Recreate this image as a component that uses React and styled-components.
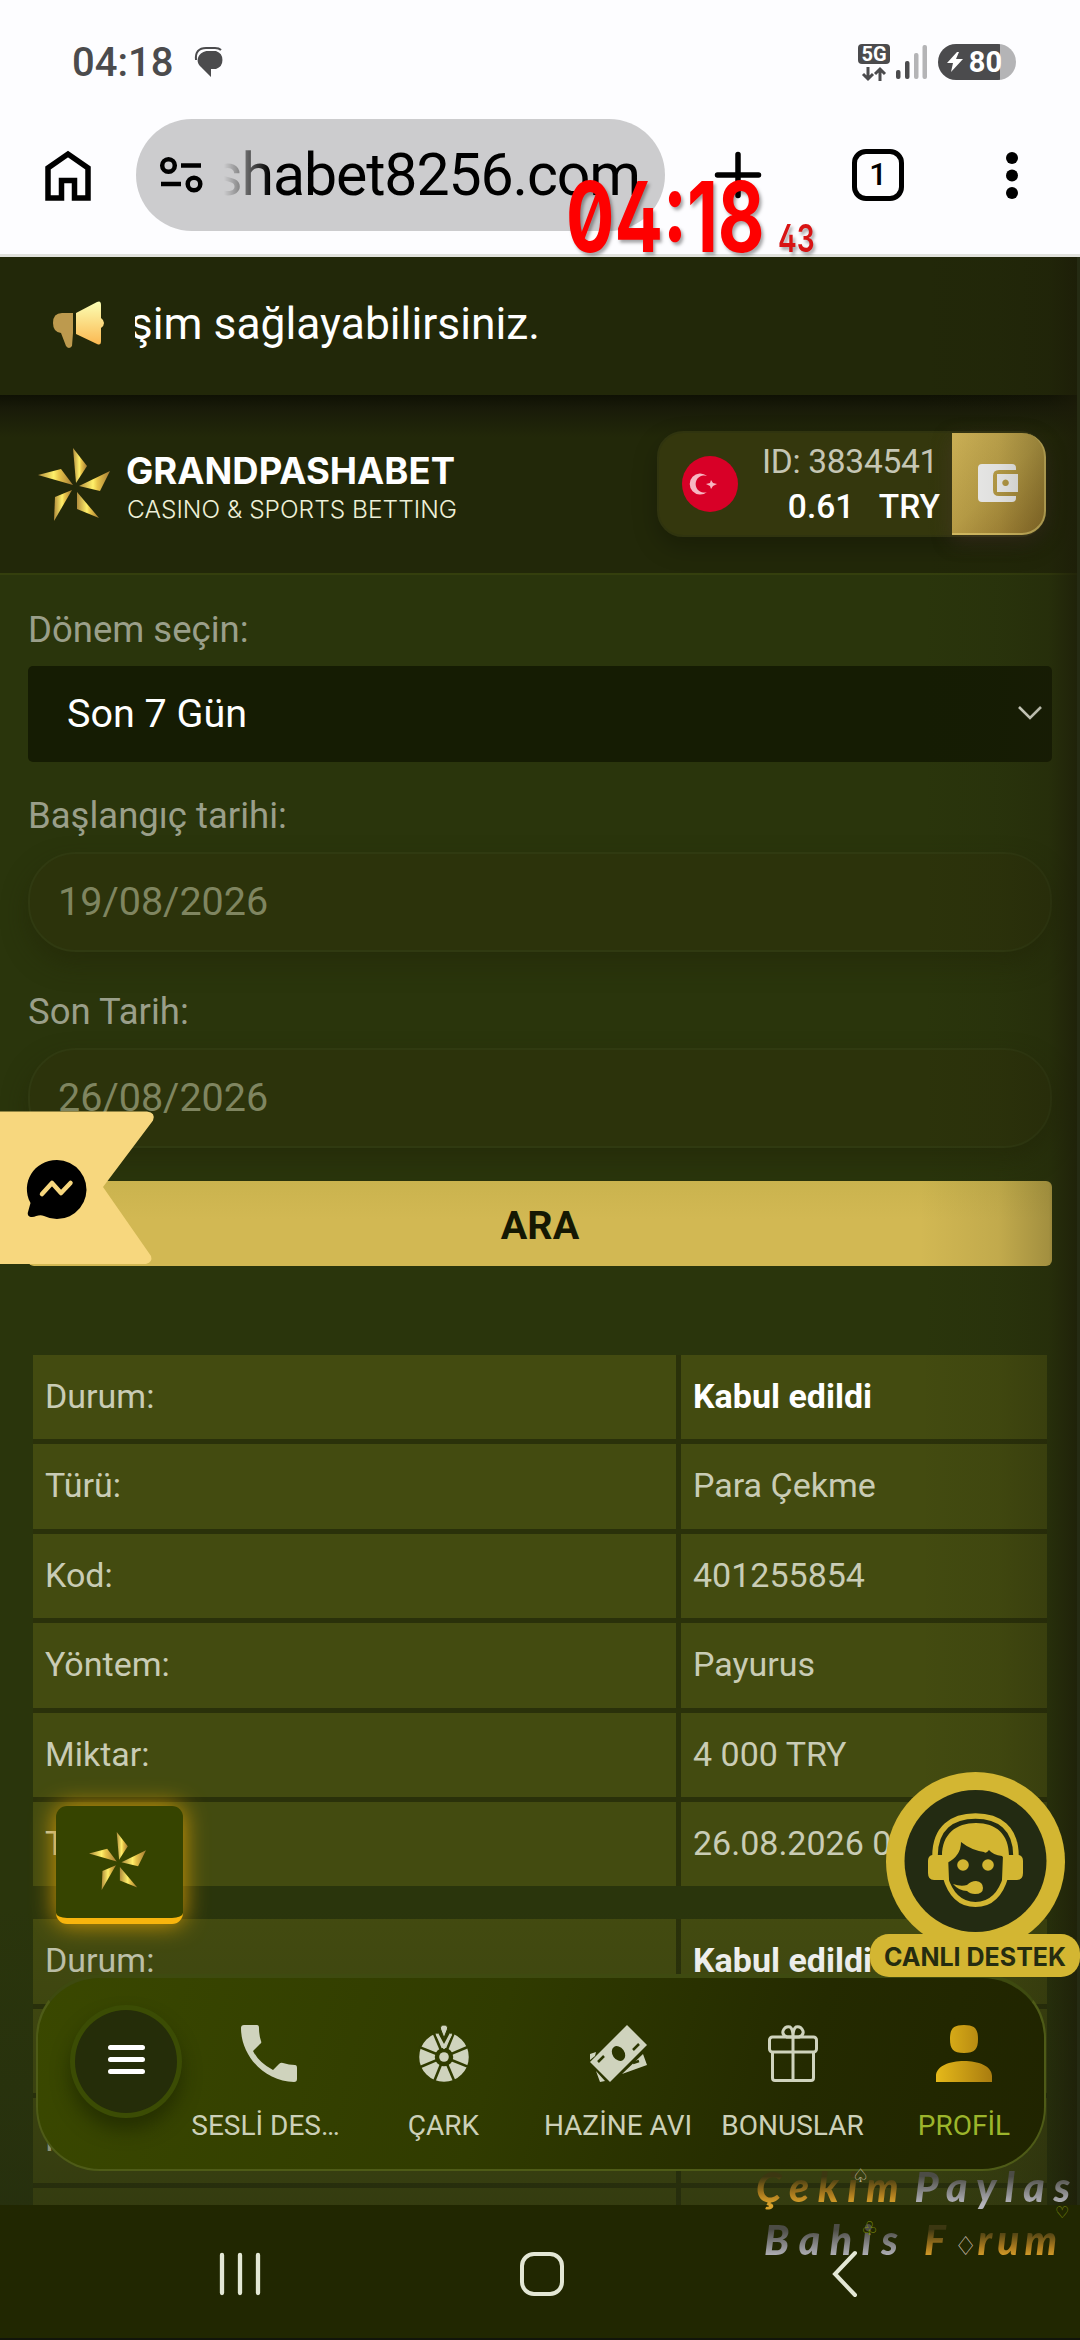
// App.jsx

import React from "react";
import styled, { createGlobalStyle } from "styled-components";

const GlobalStyle = createGlobalStyle`
  * {
    box-sizing: border-box;
  }
  body {
    margin: 0;
    background: #fdfdff;
    font-family: Roboto, "Noto Sans", sans-serif;
  }
  svg {
    display: block;
    flex: none;
    overflow: visible;
  }
`;

const Screen = styled.div`
  position: relative;
  display: flex;
  flex-direction: column;
  width: 1080px;
  height: 2340px;
  overflow: hidden;
`;

/* ---------- phone and browser chrome ---------- */

const StatusBar = styled.div`
  display: flex;
  align-items: center;
  height: 119px;
  padding: 5px 64px 0 72px;
  color: #4b4b4d;
`;

const Clock = styled.span`
  margin-right: 22px;
  font-size: 40px;
  font-weight: 500;
`;

const StatusIcons = styled.div`
  display: flex;
  align-items: center;
  margin-left: auto;
`;

const Network = styled.div`
  display: flex;
  flex-direction: column;
  align-items: center;
  gap: 3px;
  width: 32px;
  margin-right: 6px;
`;

const NetworkType = styled.span`
  width: 32px;
  height: 20px;
  border-radius: 4px;
  background: #4b4b4d;
  color: #fff;
  font-size: 20px;
  font-weight: 700;
  line-height: 20px;
  text-align: center;
`;

const Battery = styled.div`
  display: flex;
  align-items: center;
  justify-content: center;
  gap: 6px;
  width: 78px;
  height: 36px;
  margin-left: 11px;
  padding-right: 5px;
  border-radius: 18px;
  background: linear-gradient(90deg, #4b4b4d 80%, #b4b4b6 80%);
  color: #fff;
  font-size: 29px;
  font-weight: 700;
  line-height: 36px;
`;

const Toolbar = styled.div`
  display: flex;
  align-items: center;
  height: 138px;
  padding: 0 62px 23px 45px;
  border-bottom: 3px solid #e1e2dd;
`;

const UrlBar = styled.div`
  display: flex;
  align-items: center;
  width: 529px;
  height: 112px;
  margin: 0 50px 0 45px;
  padding-left: 24px;
  border-radius: 56px;
  background: #ccccce;
`;

const Url = styled.div`
  display: flex;
  justify-content: flex-end;
  width: 416px;
  margin-left: 21px;
  overflow: hidden;
  color: #000;
  font-size: 59px;
  letter-spacing: -1.1px;
  line-height: 80px;
  white-space: nowrap;
  mask-image: linear-gradient(90deg, transparent, #000 46px);
`;

const TabCount = styled.div`
  width: 52px;
  height: 52px;
  margin: 0 102px 0 91px;
  border: 5px solid #000;
  border-radius: 14px;
  font-size: 31px;
  font-weight: 500;
  line-height: 42px;
  text-align: center;
`;

const RedClock = styled.div`
  position: absolute;
  z-index: 5;
  top: 181px;
  left: 566px;
  display: flex;
  align-items: baseline;
  gap: 18px;
  color: #fe0000;
  font-family: Inter, Roboto, sans-serif;
  font-feature-settings: "zero", "cv02";
  font-size: 97px;
  font-weight: 700;
  line-height: 71px;
  text-shadow: 3px 3px 4px rgba(0, 0, 0, 0.35);
  transform: scaleX(0.74);
  transform-origin: 0 0;
  white-space: nowrap;

  small {
    color: #d81414;
    font-size: 38px;
    font-weight: 600;
  }
`;

/* ---------- site ---------- */

const Site = styled.div`
  position: relative;
  height: 1948px;
  overflow: hidden;
  background: #2a350c;
`;

// darkens the right hand side of the page
const EdgeShade = styled.div`
  position: absolute;
  z-index: 2;
  top: 0;
  right: 0;
  width: 160px;
  height: 100%;
  border-right: 3px solid #252b13;
  background: linear-gradient(
    90deg,
    rgba(28, 28, 8, 0),
    rgba(28, 28, 8, 0.09) 50%,
    rgba(28, 28, 8, 0.26) 82%,
    rgba(28, 28, 8, 0.75)
  );
`;

const Marquee = styled.div`
  display: flex;
  align-items: center;
  height: 138px;
  padding: 0 0 4px 53px;
  background: #222809;
`;

const MarqueeText = styled.div`
  display: flex;
  justify-content: flex-end;
  width: 405px;
  margin-left: 31px;
  overflow: hidden;
  color: #fff;
  font-size: 44.4px;
  line-height: 60px;
  white-space: nowrap;
`;

const Header = styled.header`
  display: flex;
  align-items: center;
  height: 180px;
  padding: 0 34px 0 38px;
  border-bottom: 2px solid #343f0d;
  background: linear-gradient(#0f1104, #191b09 14px, #222809 42px);
`;

const Brand = styled.div`
  display: flex;
  align-items: center;
`;

const Account = styled.div`
  display: flex;
  align-items: center;
  width: 389px;
  height: 106px;
  margin-left: auto;
  padding-left: 23px;
  border: 2px solid #30340f;
  border-radius: 26px;
  background: #34370d;
  box-shadow: 0 10px 24px rgba(0, 0, 0, 0.25);
`;

const Balance = styled.div`
  display: flex;
  flex: 1;
  flex-direction: column;
  align-items: flex-end;
  padding-right: 12px;
  color: #c5c6b4;
  font-size: 33.5px;
  letter-spacing: -0.3px;
  line-height: 45px;

  span {
    padding-right: 2px;
  }

  strong {
    color: #fff;
    font-weight: 500;
    letter-spacing: 0;
    word-spacing: 17px;
  }
`;

const WalletButton = styled.button`
  display: flex;
  align-items: center;
  justify-content: center;
  width: 94px;
  height: 102px;
  margin-right: -2px;
  padding: 0;
  border: solid #d6bd63;
  border-width: 0 2px 2px 0;
  border-radius: 0 24px 24px 0;
  background: linear-gradient(135deg, #d1b558, #bca048 50%, #97762c);
  box-shadow: 0 6px 20px rgba(90, 60, 60, 0.4);
`;

const Form = styled.div`
  display: flex;
  flex-direction: column;
  padding: 0 28px;
`;

const Label = styled.label`
  height: 72px;
  margin-top: ${(props) => props.$gap}px;
  color: #9a9f8a;
  font-size: 36.5px;
  line-height: 72px;
`;

const Select = styled.div`
  display: flex;
  align-items: center;
  justify-content: space-between;
  height: 96px;
  padding: 0 10px 2px 39px;
  border-radius: 5px;
  background: #151c03;
  color: #fff;
  font-size: 39.5px;
`;

const DateInput = styled.div`
  height: 100px;
  padding-left: 28px;
  border: 2px solid #303a11;
  border-radius: 48px;
  background: #2c330b;
  box-shadow: 0 12px 24px rgba(35, 38, 8, 0.55);
  color: #7f8560;
  font-size: 39.5px;
  line-height: 95px;
`;

const SearchButton = styled.button`
  position: relative;
  height: 85px;
  margin-top: 33px;
  padding: 4px 0 0;
  border: 0;
  border-radius: 6px;
  background: linear-gradient(#cab34e, #d2b853 45%);
  color: #151803;
  font-family: inherit;
  font-size: 39.5px;
  font-weight: 700;
`;

const Record = styled.div`
  display: grid;
  grid-template-columns: 643px 366px;
  grid-auto-rows: 84.4px;
  gap: 5px;
  width: 1014px;
  margin: ${(props) => props.$gap}px 0 0 33px;
  background: #2a310a;
`;

const Cell = styled.div`
  padding-left: 12px;
  background: #434b10;
  color: ${(props) => (props.$strong ? "#fff" : "#c9ccb5")};
  font-size: 34px;
  font-weight: ${(props) => (props.$strong ? 700 : 400)};
  line-height: 82px;
`;

const BottomFade = styled.div`
  position: absolute;
  bottom: 0;
  width: 100%;
  height: 300px;
  background: linear-gradient(rgba(35, 42, 16, 0), rgba(35, 42, 16, 0.45));
`;

/* ---------- floating widgets ---------- */

const Ribbon = styled.div`
  position: absolute;
  z-index: 3;
  top: 1111px;
  left: 0;
`;

const StarButton = styled.button`
  position: absolute;
  z-index: 3;
  top: 1806px;
  left: 56px;
  display: flex;
  align-items: center;
  justify-content: center;
  width: 127px;
  height: 118px;
  padding: 0 4px 2px 0;
  border: 0;
  border-bottom: 6px solid #f8b50d;
  border-radius: 11px;
  background: #364400;
  box-shadow: 0 0 24px #d99c06;
`;

const Support = styled.div`
  position: absolute;
  z-index: 4;
  top: 1772px;
  left: 870px;
  display: flex;
  flex-direction: column;
  align-items: center;
`;

const SupportLabel = styled.span`
  width: 210px;
  height: 43px;
  margin-top: -17px;
  border-radius: 19px;
  background: #d3b632;
  color: #252c10;
  font-family: Inter, Roboto, sans-serif;
  font-size: 25px;
  font-weight: 700;
  line-height: 46px;
  text-align: center;
  white-space: nowrap;
`;

const TabBar = styled.nav`
  position: absolute;
  z-index: 3;
  top: 1974px;
  left: 36px;
  display: flex;
  align-items: flex-start;
  width: 1010px;
  height: 197px;
  border: 2px solid #4e5b17;
  border-top: 4px solid #3e4a10;
  border-radius: 64px;
  background: linear-gradient(105deg, #3a4800, #303b00 45%, #242a00 75%, #202400);
`;

const MenuButton = styled.button`
  display: flex;
  flex: none;
  align-items: center;
  justify-content: center;
  width: 112px;
  height: 113px;
  margin: 27px 0 0 32px;
  padding: 0 0 4px;
  border: 5px solid #3b4c04;
  border-radius: 50%;
  background: #252d09;
  box-shadow: 0 12px 18px rgba(20, 28, 0, 0.5);
`;

const Tab = styled.div`
  display: flex;
  flex: none;
  flex-direction: column;
  align-items: center;
  width: ${(props) => props.$width}px;
  padding-top: 47px;
  color: ${(props) => (props.$active ? "#9cb52b" : "#ccd0b8")};
  font-size: 28px;
  white-space: nowrap;

  span {
    margin-top: 25px;
    padding-right: ${(props) => (props.$cut ? 7 : 0)}px;
    line-height: 38px;
  }
`;

const SystemNav = styled.div`
  display: flex;
  align-items: center;
  height: 135px;
  padding: 4px 0 0 220px;
  border-bottom: 2px solid #12150a;
  background: #212701;

  svg + svg {
    margin-left: 260px;
  }
  svg:last-child {
    margin-left: 269px;
  }
`;

const Watermark = styled.div`
  position: absolute;
  z-index: 6;
  top: 2164px;
  left: 756px;
  width: 324px;
`;

const WatermarkLine = styled.div`
  display: flex;
  gap: ${(props) => props.$gap}px;
  height: 53px;
  margin-left: ${(props) => props.$indent}px;
  font-family: Lato, sans-serif;
  font-size: 41px;
  font-style: italic;
  font-weight: 900;
  line-height: 46px;
  white-space: nowrap;
`;

const Tint = styled.span`
  width: ${(props) => props.$width}px;
  height: 50px;
  background: ${(props) =>
    props.$gold
      ? "linear-gradient(#3c3711 25%, #b07e1f 62%, #d9a22b 80%)"
      : "linear-gradient(#4c4c45 25%, #8c8c8e 58%, #b5b5bb 80%)"};
  background-clip: text;
  color: transparent;
  letter-spacing: ${(props) => props.$spacing}px;
`;

const Suit = styled.span`
  position: absolute;
  top: ${(props) => props.$top}px;
  left: ${(props) => props.$left}px;
  color: ${(props) => props.$color};
  font-family: "DejaVu Sans", sans-serif;
  font-size: ${(props) => props.$size || 19}px;
  line-height: 20px;
`;

/* ---------- drawings ---------- */

const StarMark = ({ width, height }) => (
  <svg width={width} height={height} viewBox="0 0 72 73" preserveAspectRatio="none">
    <defs>
      <linearGradient id="gold">
        <stop offset="0" stopColor="#b18c3c" />
        <stop offset="0.45" stopColor="#fff06a" />
        <stop offset="0.6" stopColor="#e8c54a" />
        <stop offset="1" stopColor="#a37a34" />
      </linearGradient>
    </defs>
    <g fill="url(#gold)">
      <path d="M35 0 49 18 38 35Z" />
      <path d="M72 23 62 43 41 38Z" />
      <path d="M0 27 23 21 35 37Z" />
      <path d="M34 42 17 49 16 73Z" />
      <path d="M39 44V61L61 70Z" />
    </g>
  </svg>
);

const BrandName = styled.svg`
  margin: 8px 0 0 16px;
  font-family: Inter, sans-serif;
`;

const BrandText = () => (
  <BrandName width="332" height="64" viewBox="0 0 332 64">
    <text x="0" y="28" textLength="329" lengthAdjust="spacingAndGlyphs" fill="#fff" fontWeight="700" fontSize="37">
      GRANDPASHABET
    </text>
    <text x="1" y="62" textLength="330" lengthAdjust="spacingAndGlyphs" fill="#eef0d8" fontWeight="300" fontSize="24.500">
      CASINO &amp; SPORTS BETTING
    </text>
  </BrandName>
);

const ChatIcon = () => (
  <svg width="31" height="30" viewBox="0 0 31 30">
    <path d="M1 13C0 5 4 1 11 1h9c3 0 5 1 6 2" fill="none" stroke="#4b4b4d" strokeWidth="2" />
    <path d="M13 4h8a9.500 9.500 0 0 1 0 18h-5v8L6 20C-1 14 4 4 13 4Z" fill="#4b4b4d" />
  </svg>
);

const DataArrows = () => (
  <svg width="24" height="14" viewBox="0 0 24 14" fill="none" stroke="#4b4b4d" strokeWidth="3">
    <path d="M6 0v12M1 7l5 5 5-5M18 14V2M13 7l5-5 5 5" />
  </svg>
);

const SignalIcon = () => (
  <svg width="31" height="34" viewBox="0 0 31 34">
    <rect x="0" y="25" width="4.500" height="9" rx="2" fill="#4b4b4d" />
    <rect x="9" y="16" width="4.500" height="18" rx="2" fill="#4b4b4d" />
    <rect x="18" y="8" width="4.500" height="26" rx="2" fill="#b4b4b6" />
    <rect x="26.500" y="0" width="4.500" height="34" rx="2" fill="#b4b4b6" />
  </svg>
);

const HomeIcon = () => (
  <svg width="46" height="51" viewBox="0 0 46 51">
    <path d="M3 48V18L23 4l20 14v30H29.500V30.500h-13V48Z" fill="none" stroke="#000" strokeWidth="5.500" />
  </svg>
);

const TuneIcon = () => (
  <svg width="43" height="36" viewBox="0 0 43 36" fill="none" stroke="#000" strokeWidth="4.500">
    <circle cx="8.500" cy="8.500" r="6.300" />
    <path d="M21 8.500h20M1 27h20" />
    <circle cx="34" cy="27" r="6.300" />
  </svg>
);

const Megaphone = () => (
  <svg width="51" height="47" viewBox="0 0 51 47">
    <defs>
      <linearGradient id="horn" x2="0" y2="1">
        <stop offset="0" stopColor="#fbffb4" />
        <stop offset="1" stopColor="#fbb851" />
      </linearGradient>
    </defs>
    <path d="M20 12v20l-1 13q-3 4-6 0L8 32Q0 31 0 22 0 12 9 12Z" fill="#bd9a4e" />
    <path d="M23 12 44 1q4-2 4 3v13q3 2 3 5t-3 5v13q0 5-4 3L23 33Z" fill="url(#horn)" />
  </svg>
);

const Flag = () => (
  <svg width="56" height="56" viewBox="0 0 56 56">
    <circle cx="28" cy="28" r="28" fill="#d80027" />
    <path d="M25 20a10.500 10.500 0 1 0 0 16 8.500 8.500 0 1 1 0-16Z" fill="#f7b6c2" />
    <path d="m29 24 2 3 4 1-4 2-2 3-1-3-4-2 4-1Z" fill="#f7b6c2" />
  </svg>
);

const WalletIcon = () => (
  <svg width="40" height="38" viewBox="0 0 40 38">
    <path d="M4 0h30q4 0 4 4v2H21q-6 0-6 6v14q0 6 6 6h17v2q0 4-4 4H4q-4 0-4-4V4q0-4 4-4Z" fill="#f3f3f3" />
    <path d="M19 10h21v18H19Zm8.500 5.500a3.300 3.300 0 1 0 .1 0Z" fill="#f3f3f3" fillRule="evenodd" />
  </svg>
);

const RibbonShape = () => (
  <svg width="154" height="153" viewBox="0 0 154 153">
    <path d="M0 .5H147q9 1 6 9L103 76l48 69q2 6-5 8H0Z" fill="#f7d77e" />
    <path d="M57 49a29.500 29.500 0 1 1-13 56c-5-2-8 1-12 1-3 0-5-2-4-5l2.500-9C20 72 34 49 57 49Z" fill="#000" />
    <path d="m42 83 10-11 9 10 9.500-10" fill="none" stroke="#f7d77e" strokeWidth="4.500" strokeLinecap="round" strokeLinejoin="round" />
  </svg>
);

const SupportAgent = () => (
  <svg width="179" height="179" viewBox="0 0 179 179">
    <circle cx="89.500" cy="89.500" r="89.500" fill="#d3b632" />
    <circle cx="89.500" cy="89" r="71" fill="#232b12" />
    <path d="M49 84C49 56 66 44 89.500 44S130 56 130 84" fill="none" stroke="#d3b632" strokeWidth="5.500" />
    <path d="M56 84C56 62 70 51 90 51s33 11 33 33v8l-7-8q-9-1-13-6-3 4-5 2-13-2-23-10 0 14-14 21Z" fill="#d3b632" />
    <path d="M46 83h16l1 25H48q-6 0-6-7V89q0-5 4-6ZM133 83h-16l-1 25h15q6 0 6-7V89q0-5-4-6Z" fill="#d3b632" />
    <path d="M59 104q8 28.500 30.500 28.500T120 104" fill="none" stroke="#d3b632" strokeWidth="5" />
    <circle cx="77" cy="93" r="5.800" fill="#d3b632" />
    <circle cx="102" cy="93" r="5.800" fill="#d3b632" />
    <path d="M67 112q8 3 14 1 4-4 9-4 7 1 7 7t-8 6q-5 0-8-3-8 0-14-7Z" fill="#d3b632" />
  </svg>
);

const PhoneIcon = () => (
  <svg width="56" height="57" viewBox="0 0 56 57" fill="#cfd3bd">
    <path d="M3 0h13q2 0 2 3 0 7 2 13 1 2-1 3l-7 7q6 12 20 19l6-6q2-2 4-1 6 2 12 2 2 0 2 3v11q0 3-3 3C25 57 0 32 0 3q0-3 3-3Z" />
  </svg>
);

const WheelIcon = () => (
  <svg width="50" height="57" viewBox="0 0 50 57">
    <circle cx="25" cy="32" r="17" fill="none" stroke="#cfd3bd" strokeWidth="15.500" />
    <g stroke="#303b00" strokeWidth="2.600">
      {[22, 67, 112, 157, 202, 247, 292, 337].map((angle) => (
        <path key={angle} d="M25 24V5" transform={`rotate(${angle} 25 32)`} />
      ))}
    </g>
    <path d="M16 5h18l-9 19Z" fill="#303b00" />
    <path d="m18 9 7 13 7-13" fill="none" stroke="#cfd3bd" strokeWidth="2.800" />
    <path d="M25 0q4 0 3.500 4L25 13 21.500 4Q21 0 25 0Z" fill="#cfd3bd" stroke="#303b00" />
    <circle cx="25" cy="32" r="8" fill="#303b00" />
    <circle cx="25" cy="32" r="4.800" fill="#cfd3bd" />
  </svg>
);

const MoneyIcon = () => (
  <svg width="57" height="57" viewBox="0 0 57 57">
    <path d="M0 29 6 27 5 31 0 35ZM6 46l9 10-5 1ZM32 49 53 29l4 11Z" fill="#cfd3bd" />
    <path d="M0 37 37 0l20 20-37 37Z" fill="#cfd3bd" />
    <ellipse cx="28.500" cy="28.500" rx="6" ry="8" transform="rotate(-35 28.500 28.500)" fill="#2b3500" />
    <path d="m8 37 6-6M43 25l6-6M43 38l6-2" stroke="#2b3500" strokeWidth="2.500" />
  </svg>
);

const GiftIcon = () => (
  <svg width="50" height="57" viewBox="0 0 50 57" fill="none" stroke="#cfd3bd" strokeWidth="3">
    <rect x="1.500" y="12" width="47" height="15" rx="3" />
    <path d="M4.500 27v26q0 2.500 2.500 2.500h36q2.500 0 2.500-2.500V27M25 12v43" />
    <path d="M25 12h-6q-5-2-4-6 2-5 7-4 3 2 3 10Zm0 0h6q5-2 4-6-2-5-7-4-3 2-3 10Z" />
  </svg>
);

const ProfileIcon = () => (
  <svg width="56" height="57" viewBox="0 0 56 57">
    <defs>
      <linearGradient id="profile">
        <stop offset="0" stopColor="#e5b91a" />
        <stop offset="1" stopColor="#a97c0f" />
      </linearGradient>
    </defs>
    <path d="M28 0c11 0 14 4 14 14s-3 14-14 14-14-4-14-14S17 0 28 0ZM0 57v-6c0-20 56-20 56 0v6Z" fill="url(#profile)" />
  </svg>
);

/* ---------- data ---------- */

const record = [
  ["Durum:", "Kabul edildi"],
  ["Türü:", "Para Çekme"],
  ["Kod:", "401255854"],
  ["Yöntem:", "Payurus"],
  ["Miktar:", "4 000 TRY"],
  ["Tarih:", "26.08.2026 04:12"],
];

const nextRecord = [
  ["Durum:", "Kabul edildi"],
  ["Türü:", ""],
  ["Kod:", ""],
  ["", ""],
];

const tabs = [
  { label: "SESLİ DES…", icon: <PhoneIcon />, width: 174, cut: true },
  { label: "ÇARK", icon: <WheelIcon />, width: 175 },
  { label: "HAZİNE AVI", icon: <MoneyIcon />, width: 174 },
  { label: "BONUSLAR", icon: <GiftIcon />, width: 175 },
  { label: "PROFİL", icon: <ProfileIcon />, width: 168, active: true },
];

const RecordTable = ({ rows, gap }) => (
  <Record $gap={gap}>
    {rows.map(([name, value], i) => (
      <React.Fragment key={i}>
        <Cell>{name}</Cell>
        <Cell $strong={i === 0}>{value}</Cell>
      </React.Fragment>
    ))}
  </Record>
);

export default function App() {
  return (
    <Screen>
      <GlobalStyle />
      <StatusBar>
        <Clock>04:18</Clock>
        <ChatIcon />
        <StatusIcons>
          <Network>
            <NetworkType>5G</NetworkType>
            <DataArrows />
          </Network>
          <SignalIcon />
          <Battery>
            <svg width="16" height="20" viewBox="0 0 16 20">
              <path d="M10 0 0 11h6L4 20 16 7H9l3-7Z" fill="#fff" />
            </svg>
            80
          </Battery>
        </StatusIcons>
      </StatusBar>

      <Toolbar>
        <HomeIcon />
        <UrlBar>
          <TuneIcon />
          <Url>shabet8256.com</Url>
        </UrlBar>
        <svg width="46" height="46" viewBox="0 0 46 46">
          <path d="M23 2.500v41M2.500 23h41" stroke="#000" strokeWidth="5.500" strokeLinecap="round" />
        </svg>
        <TabCount>1</TabCount>
        <svg width="12" height="47" viewBox="0 0 12 47">
          <circle cx="6" cy="6" r="6" />
          <circle cx="6" cy="23.500" r="6" />
          <circle cx="6" cy="41" r="6" />
        </svg>
      </Toolbar>
      <RedClock>
        04:18<small>43</small>
      </RedClock>

      <Site>
        <Marquee>
          <Megaphone />
          <MarqueeText>şim sağlayabilirsiniz.</MarqueeText>
        </Marquee>
        <Header>
          <Brand>
            <StarMark width={72} height={73} />
            <BrandText />
          </Brand>
          <Account>
            <Flag />
            <Balance>
              <span>ID: 3834541</span>
              <strong>0.61 TRY</strong>
            </Balance>
            <WalletButton>
              <WalletIcon />
            </WalletButton>
          </Account>
        </Header>

        <Form>
          <Label $gap={19}>Dönem seçin:</Label>
          <Select>
            Son 7 Gün
            <svg width="24" height="14" viewBox="0 0 24 14">
              <path d="m1 1 11 11L23 1" fill="none" stroke="#e4e6d8" strokeWidth="2.600" />
            </svg>
          </Select>
          <Label $gap={18}>Başlangıç tarihi:</Label>
          <DateInput>19/08/2026</DateInput>
          <Label $gap={24}>Son Tarih:</Label>
          <DateInput>26/08/2026</DateInput>
          <SearchButton>ARA</SearchButton>
        </Form>

        <RecordTable rows={record} gap={89} />
        <RecordTable rows={nextRecord} gap={33} />
        <BottomFade />
        <EdgeShade />
      </Site>

      <SystemNav>
        <svg width="40" height="42" viewBox="0 0 40 42">
          <path d="M2 2v38M20 2v38M38 2v38" stroke="#e3e7d5" strokeWidth="4.300" strokeLinecap="round" />
        </svg>
        <svg width="44" height="44" viewBox="0 0 44 44">
          <rect x="2" y="2" width="40" height="40" rx="12" fill="none" stroke="#e3e7d5" strokeWidth="4" />
        </svg>
        <svg width="24" height="46" viewBox="0 0 24 46">
          <path d="M22 2 2 23l20 21" fill="none" stroke="#e3e7d5" strokeWidth="4" strokeLinecap="round" />
        </svg>
      </SystemNav>

      <Ribbon>
        <RibbonShape />
      </Ribbon>
      <StarButton>
        <StarMark width={57} height={58} />
      </StarButton>
      <Support>
        <SupportAgent />
        <SupportLabel>CANLI DESTEK</SupportLabel>
      </Support>

      <TabBar>
        <MenuButton>
          <svg width="37" height="29" viewBox="0 0 37 29">
            <path d="M2.500 2.500h32M2.500 14.500h32M2.500 26.500h32" stroke="#fff" strokeWidth="5" strokeLinecap="round" />
          </svg>
        </MenuButton>
        {tabs.map((tab) => (
          <Tab key={tab.label} $width={tab.width} $active={tab.active} $cut={tab.cut}>
            {tab.icon}
            <span>{tab.label}</span>
          </Tab>
        ))}
      </TabBar>

      <Watermark>
        <WatermarkLine $gap={4} $indent={0}>
          <Tint $gold $width={157} $spacing={8.5}>Çekim</Tint>
          <Tint $width={168} $spacing={8.5}>Paylas</Tint>
        </WatermarkLine>
        <WatermarkLine $gap={14} $indent={8}>
          <Tint $width={146} $spacing={9.5}>Bahis</Tint>
          <Tint $gold $width={150} $spacing={5}>F&nbsp;&nbsp;rum</Tint>
        </WatermarkLine>
        <Suit $top={1} $left={96} $color="#c9bda4">♤</Suit>
        <Suit $top={39} $left={299} $color="#87980c" $size={16}>♡</Suit>
        <Suit $top={54} $left={105} $color="#87980c">♧</Suit>
        <Suit $top={72} $left={198} $color="#cdbfb0" $size={26}>♢</Suit>
      </Watermark>
    </Screen>
  );
}
